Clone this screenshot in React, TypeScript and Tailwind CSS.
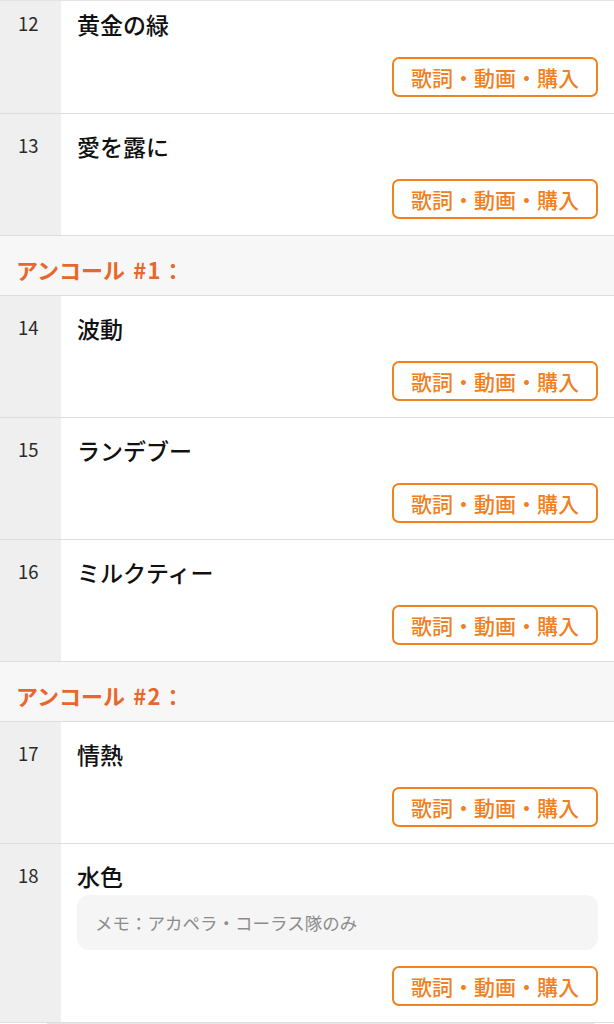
const FONT = { fontFamily: '"Noto Sans CJK JP", "Noto Sans", sans-serif' };

type Song = { no: number; title: string; memo?: string };

type Block =
  | { kind: 'song'; song: Song; first?: boolean }
  | { kind: 'header'; label: string; num: string };

const blocks: Block[] = [
  { kind: 'song', song: { no: 12, title: '黄金の緑' }, first: true },
  { kind: 'song', song: { no: 13, title: '愛を露に' } },
  { kind: 'header', label: 'アンコール', num: '#1' },
  { kind: 'song', song: { no: 14, title: '波動' } },
  { kind: 'song', song: { no: 15, title: 'ランデブー' } },
  { kind: 'song', song: { no: 16, title: 'ミルクティー' } },
  { kind: 'header', label: 'アンコール', num: '#2' },
  { kind: 'song', song: { no: 17, title: '情熱' } },
  { kind: 'song', song: { no: 18, title: '水色', memo: 'メモ：アカペラ・コーラス隊のみ' } },
];

function SongRow({ song, first }: { song: Song; first?: boolean }) {
  return (
    <div className="flex border-b border-[#dddddd]">
      <div
        className={`w-[61px] shrink-0 bg-[#efefef] pl-[18px] text-[18.5px] leading-[27px] text-[#2a2a2a] ${
          first ? 'pt-[9px]' : 'pt-[18px]'
        }`}
      >
        {song.no}
      </div>
      <div className={`flex-1 pl-4 pr-4 pb-4 ${first ? 'pt-[7px]' : 'pt-4'}`}>
        <div className="text-[23px] font-medium leading-[33px] text-[#111111]">{song.title}</div>
        {song.memo && (
          <div className="mt-[2px] rounded-[12px] bg-[#f5f5f5] px-[18px] py-[13px] text-[17.5px] leading-[29px] text-[#8c8c8c]">
            {song.memo}
          </div>
        )}
        <div className="mt-4 flex justify-end">
          <div className="rounded-[7px] border-2 border-[#f0821f] px-[17px] text-[21px] font-medium leading-[36px] text-[#ef8023]">
            歌詞・動画・購入
          </div>
        </div>
      </div>
    </div>
  );
}

function Header({ label, num }: { label: string; num: string }) {
  return (
    <div className="border-b border-[#dddddd] bg-[#f7f7f7] pl-4 pt-[19px] pb-[11px] text-[22px] font-bold leading-[29px] text-[#e8672b]">
      {label} <span className="ml-[3px] tracking-[1.5px]">{num}</span>：
    </div>
  );
}

export default function App() {
  return (
    <div className="h-[1024px] w-[614px] overflow-hidden bg-white" style={FONT}>
      <div className="border-t border-[#e4e4e4]" />
      {blocks.map((b, i) =>
        b.kind === 'song' ? (
          <SongRow key={i} song={b.song} first={b.first} />
        ) : (
          <Header key={i} label={b.label} num={b.num} />
        )
      )}
      <div className="mx-[47px] mr-[20px] h-[3px] bg-[#e6e6e6]" />
    </div>
  );
}
